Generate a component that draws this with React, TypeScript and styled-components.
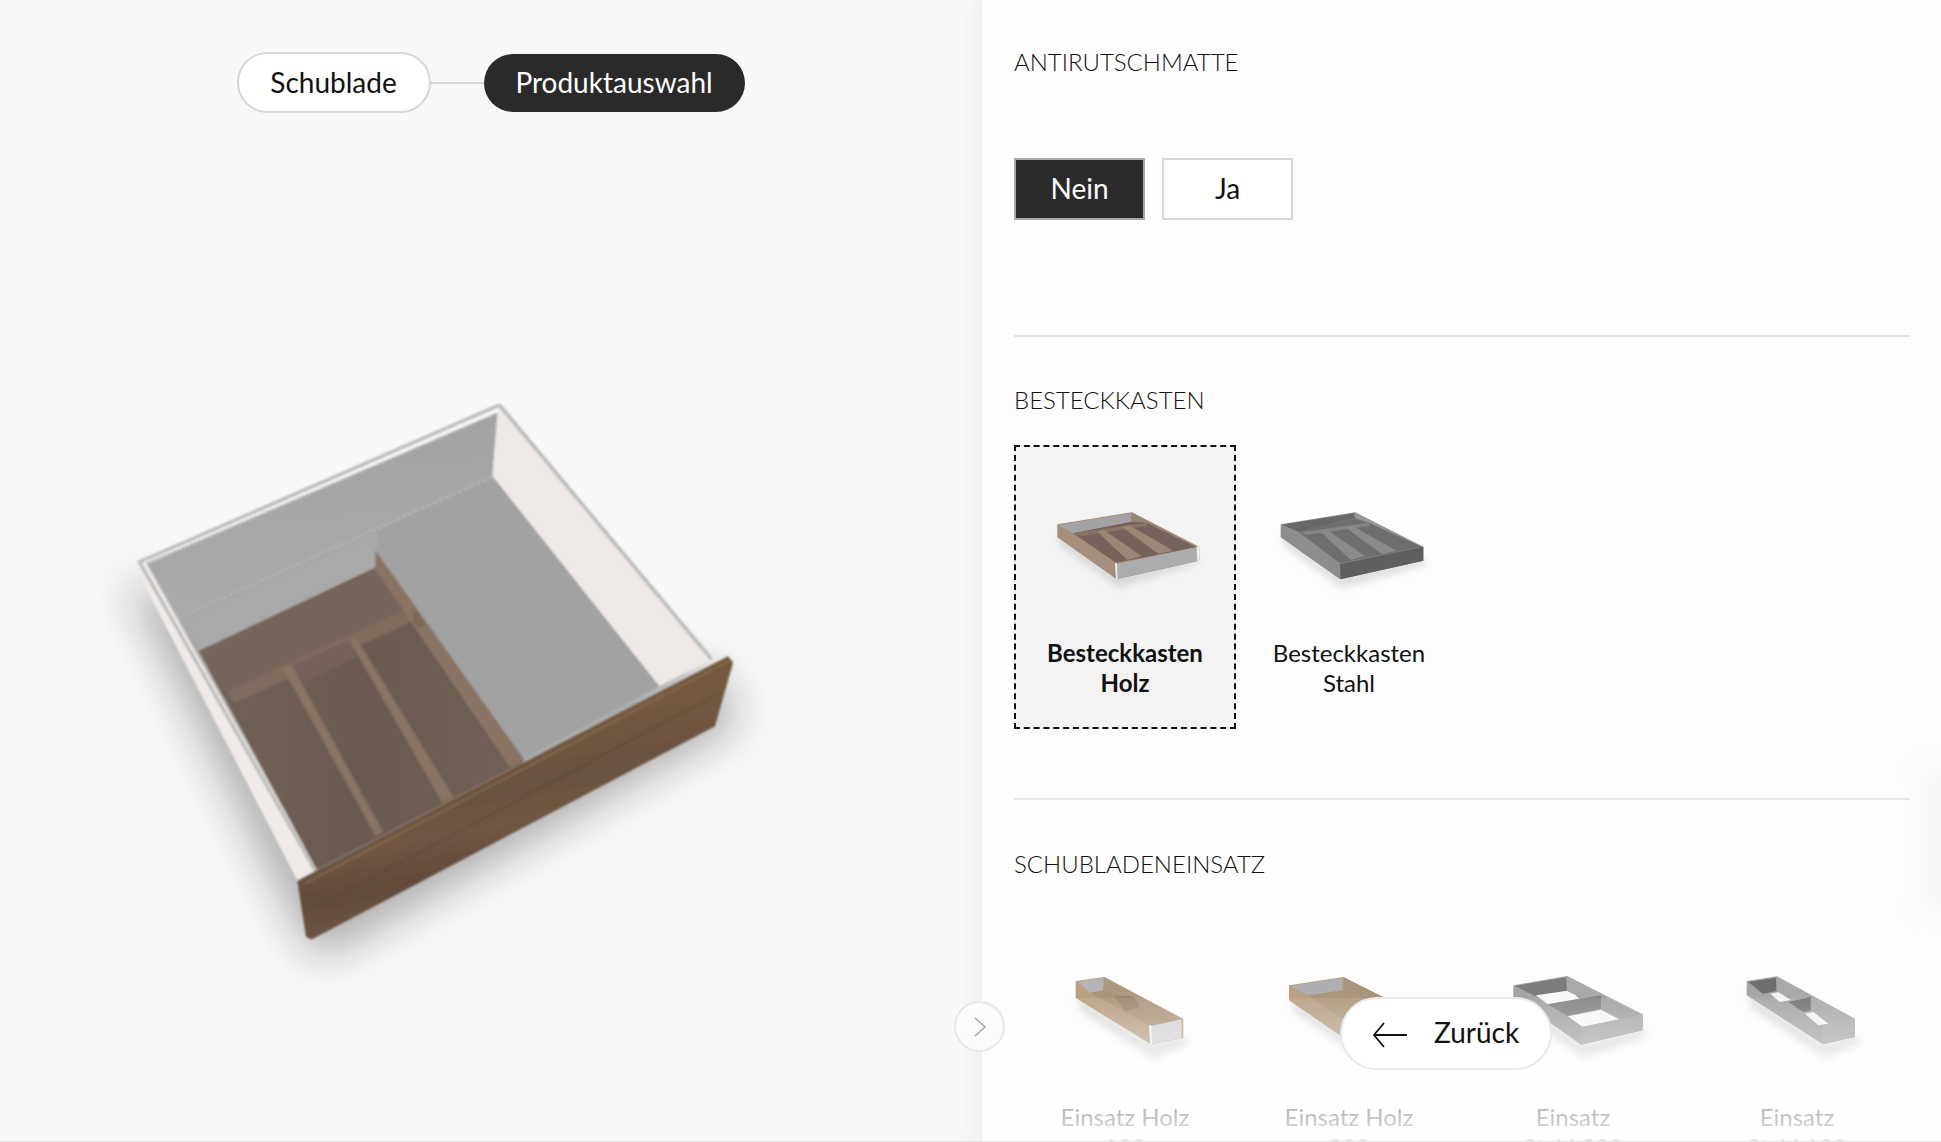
import React from "react";
import styled, { createGlobalStyle } from "styled-components";

const Global = createGlobalStyle`
  html, body { margin: 0; padding: 0; height: 100%; overflow: hidden; background: #f8f8f8; }
  * { box-sizing: border-box; }
  body { font-family: Lato, "Open Sans", "Liberation Sans", sans-serif; color: #111; }
`;

const Page = styled.div`
  display: flex;
  height: 1142px;
  overflow: hidden;
  position: relative;
  border-bottom: 1px solid #e4e4e4;
`;

const LeftPanel = styled.section`
  flex: 0 0 981px;
  display: flex;
  flex-direction: column;
  background: #f8f8f8;
`;

const Stepper = styled.nav`
  display: flex;
  align-items: center;
  justify-content: center;
  margin-top: 52px;
  height: 61px;
`;

const StepPill = styled.div<{ $active?: boolean }>`
  display: flex;
  align-items: center;
  justify-content: center;
  font-size: 28px;
  padding-bottom: 2px;
  border-radius: 31px;
  width: ${(p) => (p.$active ? "261px" : "194px")};
  height: ${(p) => (p.$active ? "58px" : "61px")};
  background: ${(p) => (p.$active ? "#2a2a2a" : "#fff")};
  color: ${(p) => (p.$active ? "#fff" : "#111")};
  border: ${(p) => (p.$active ? "none" : "2px solid #d6d6d6")};
`;

const StepLink = styled.span`
  width: 53px;
  height: 2px;
  background: #d6d6d6;
`;

const DrawerStage = styled.svg`
  display: block;
  width: 680px;
  height: 600px;
  margin: 267px 0 0 100px;
  overflow: visible;
`;

const RightPanel = styled.section`
  flex: 1;
  position: relative;
  background: #fdfdfd;
  padding: 0 31px 0 32px;
  box-shadow: -6px 0 18px rgba(0, 0, 0, 0.05);
  border-left: 1px solid #efefef;
  min-width: 0;
`;

const Section = styled.div<{ $bottom: number; $top: number; $rule?: boolean }>`
  padding-top: ${(p) => p.$top}px;
  padding-bottom: ${(p) => p.$bottom}px;
  border-bottom: ${(p) => (p.$rule ? "2px solid #e6e6e6" : "none")};
`;

const Heading = styled.h2`
  margin: 0;
  font-size: 24px;
  line-height: 30px;
  font-weight: 300;
  color: #111;
`;

const ChoiceRow = styled.div`
  display: flex;
  gap: 17px;
  margin-top: 81px;
`;

const Choice = styled.button<{ $active?: boolean }>`
  width: 131px;
  height: 62px;
  font: inherit;
  font-size: 28px;
  padding: 0 0 2px;
  background: ${(p) => (p.$active ? "#2a2a2a" : "#fff")};
  color: ${(p) => (p.$active ? "#fff" : "#111")};
  border: 2px solid ${(p) => (p.$active ? "#a8a8a8" : "#d6d6d6")};
`;

const ProductGrid = styled.div`
  display: grid;
  grid-template-columns: repeat(4, 224px);
  margin-top: 30px;
`;

const ProductCard = styled.div<{ $selected?: boolean }>`
  width: 222px;
  height: 284px;
  display: flex;
  flex-direction: column;
  align-items: center;
  padding-top: 58px;
  border: 2px dashed ${(p) => (p.$selected ? "#111" : "transparent")};
  background: ${(p) => (p.$selected ? "#f3f3f3" : "transparent")};
`;

const ProductArt = styled.svg`
  display: block;
  width: 160px;
  height: 80px;
  flex: none;
  overflow: visible;
`;

const ProductLabel = styled.div<{ $selected?: boolean }>`
  width: 170px;
  margin-top: 53px;
  font-size: 24px;
  line-height: 30px;
  text-align: center;
  font-weight: ${(p) => (p.$selected ? 700 : 400)};
  color: #111;
`;

const BottomFade = styled.div`
  position: absolute;
  left: 0;
  right: 0;
  bottom: 0;
  height: 143px;
  background: linear-gradient(rgba(255, 255, 255, 0.08), rgba(255, 255, 255, 0.88));
`;

const EdgeGlow = styled.div`
  position: absolute;
  right: -22px;
  top: 765px;
  width: 44px;
  height: 150px;
  border-radius: 22px;
  background: rgba(240, 240, 248, 0.3);
  filter: blur(10px);
`;

const CollapseButton = styled.button`
  position: absolute;
  left: -28px;
  bottom: 89px;
  width: 51px;
  height: 51px;
  padding: 0;
  border-radius: 50%;
  border: 2px solid #e8e8e8;
  background: #fbfbfb;
  display: flex;
  align-items: center;
  justify-content: center;
`;

const BackButton = styled.button`
  position: absolute;
  right: 389px;
  bottom: 71px;
  width: 212px;
  height: 73px;
  border-radius: 37px;
  border: 2px solid #e8e8e8;
  background: #fff;
  display: flex;
  align-items: center;
  justify-content: flex-start;
  gap: 26px;
  padding: 0 0 3px 30px;
  font: inherit;
  font-size: 28px;
  color: #111;
`;

const BackArrow = styled.svg`
  flex: none;
  margin-top: 5px;
`;

type Poly = [string, string];
type Art = { box: string; shadow: string; polys: Poly[] };

const arts: Record<string, Art> = {
  holz: {
    box: "15 15 480 240",
    shadow: "52,100 230,228 478,175 470,190 235,262 60,135",
    polys: [
      ["52,73 275,37 478,140 478,182 230,238 52,112", "#a68e7b"],
      ["56,75 272,40 275,65 100,100", "#a3a3a5"],
      ["275,37 470,140 320,68 275,65", "#9a8674"],
      ["100,100 275,65 320,68 470,142 228,188", "#75625a"],
      ["100,100 320,68 322,78 125,108", "#8a7565"],
      ["172,95 192,90 305,168 262,180", "#9b8674"],
      ["246,80 268,76 400,152 355,162", "#9b8674"],
      ["228,192 475,140 475,182 232,236", "#abacae"],
      ["225,190 231,190 233,238 228,238", "#f2f0ee"],
      ["470,140 478,138 478,182 472,183", "#f0f0f0"],
    ],
  },
  stahl: {
    box: "687 15 480 240",
    shadow: "722,100 900,228 1150,175 1160,195 905,265 735,140",
    polys: [
      ["722,73 945,37 1150,140 1150,182 900,238 722,112", "#8d8d8d"],
      ["726,74 942,40 945,55 775,95", "#686868"],
      ["945,37 1145,140 990,70 945,55", "#969696"],
      ["775,95 945,55 990,70 1145,140 900,190", "#6e6e6e"],
      ["780,97 985,68 990,78 800,105", "#858585"],
      ["842,95 862,90 975,168 932,180", "#8a8a8a"],
      ["916,82 938,78 1070,152 1025,162", "#8a8a8a"],
      ["900,192 1150,140 1150,182 902,238", "#5f5f5f"],
    ],
  },
  e100: {
    box: "315 21 480 240",
    shadow: "407,100 630,240 730,222 745,245 640,295 425,150",
    polys: [
      ["407,57 493,45 730,170 730,228 632,247 407,108", "#b9a184"],
      ["412,60 490,48 490,85 452,92", "#b5b5b9"],
      ["493,45 725,172 700,176 490,85", "#ae9880"],
      ["452,92 490,85 700,176 632,192", "#ab9579"],
      ["520,100 582,103 600,135 555,148", "#9c8770"],
      ["632,192 725,172 725,228 634,245", "#d4d4d6"],
      ["627,190 634,190 636,247 630,247", "#f1f0ef"],
    ],
  },
  e200: {
    box: "987 21 480 240",
    shadow: "1047,100 1240,242 1435,200 1445,225 1250,285 1065,150",
    polys: [
      ["1047,70 1210,45 1435,157 1435,205 1240,248 1047,115", "#b9a184"],
      ["1052,72 1207,48 1208,85 1105,100", "#adadb2"],
      ["1210,45 1430,157 1395,162 1208,85", "#a9947c"],
      ["1105,100 1208,85 1395,162 1240,195", "#ad987d"],
      ["1240,195 1435,157 1435,205 1240,248", "#d2d2d4"],
    ],
  },
  s200: {
    box: "276 21 480 240",
    shadow: "337,100 540,242 725,200 740,225 545,290 355,150",
    polys: [
      ["337,70 498,42 725,157 725,205 540,248 337,105", "#a4a4a4"],
      ["342,72 495,46 498,87 402,102", "#7c7c7c"],
      ["405,100 510,85 535,110 440,127", "#f8f8f8"],
      ["498,42 720,157 615,143 498,87", "#a9a9a9"],
      ["440,127 600,100 600,140 500,162", "#858585"],
      ["500,163 600,143 660,175 545,195", "#f6f6f6"],
      ["600,100 720,157 660,172 600,140", "#a2a2a2"],
      ["540,195 725,157 725,205 540,248", "#a9a9a9"],
    ],
  },
  s100: {
    box: "951 21 480 240",
    shadow: "1040,95 1268,240 1365,220 1380,245 1275,290 1055,140",
    polys: [
      ["1040,57 1130,43 1365,170 1365,225 1268,247 1040,100", "#a6a6a6"],
      ["1045,60 1128,47 1130,87 1088,95", "#6e6e6e"],
      ["1110,95 1150,88 1175,113 1140,120", "#f2f2f2"],
      ["1130,43 1360,170 1285,185 1130,87", "#a9a9a9"],
      ["1165,120 1232,105 1232,145 1210,150", "#737373"],
      ["1215,155 1240,150 1285,185 1255,190", "#f4f4f4"],
      ["1268,190 1365,170 1365,225 1268,247", "#ababab"],
    ],
  },
};

const ProductImage = ({ kind }: { kind: string }) => {
  const art = arts[kind];
  return (
    <ProductArt viewBox={art.box} aria-hidden>
      <defs>
        <filter id={`s-${kind}`} x="-30%" y="-30%" width="160%" height="160%">
          <feGaussianBlur stdDeviation="11" />
        </filter>
        <filter id={`b-${kind}`} x="-5%" y="-5%" width="110%" height="110%">
          <feGaussianBlur stdDeviation="1.6" />
        </filter>
      </defs>
      <polygon points={art.shadow} fill="rgba(0,0,0,0.12)" filter={`url(#s-${kind})`} />
      <g filter={`url(#b-${kind})`}>
        {art.polys.map(([points, fill], i) => (
          <polygon key={i} points={points} fill={fill} />
        ))}
      </g>
    </ProductArt>
  );
};

const Drawer = () => (
  <DrawerStage viewBox="0 0 1568 1568" preserveAspectRatio="none" aria-hidden>
    <defs>
      <filter id="drawerShadow" x="-40%" y="-40%" width="180%" height="180%">
        <feGaussianBlur stdDeviation="55" />
      </filter>
      <filter id="drawerSoft" x="-5%" y="-5%" width="110%" height="110%">
        <feGaussianBlur stdDeviation="3" />
      </filter>
      <linearGradient id="frontWood" x1="0.55" y1="0.25" x2="0.7" y2="0.8">
        <stop offset="0" stopColor="#74583f" />
        <stop offset="0.3" stopColor="#6a523f" />
        <stop offset="0.55" stopColor="#705644" />
        <stop offset="0.8" stopColor="#624a39" />
        <stop offset="1" stopColor="#6c5342" />
      </linearGradient>
      <linearGradient id="backWall" x1="0.55" y1="0" x2="0.65" y2="1">
        <stop offset="0" stopColor="#a3a3a3" />
        <stop offset="1" stopColor="#aaaaaa" />
      </linearGradient>
      <linearGradient id="trayFloor" x1="0" y1="0" x2="1" y2="0">
        <stop offset="0" stopColor="#726257" />
        <stop offset="0.5" stopColor="#6a5a4f" />
        <stop offset="1" stopColor="#716156" />
      </linearGradient>
    </defs>
    <polygon
      points="60,520 540,680 1420,760 1470,900 500,1520 400,1300"
      fill="rgba(0,0,0,0.3)"
      filter="url(#drawerShadow)"
    />
    <g filter="url(#drawerSoft)">
      <polygon points="180,625 905,250 1290,800 500,1280" fill="#a2a2a2" />
      <polygon points="105,478 917,85 905,250 180,625" fill="url(#backWall)" />
      <polygon points="185,628 640,395 640,490 228,708" fill="#a9a9a9" />
      <polyline points="185,622 560,430 905,255" fill="none" stroke="#b7b7b7" strokeWidth="4" strokeDasharray="8 8" />
      <polygon points="88,475 105,478 500,1280 455,1308 100,530" fill="#f0ebe9" />
      <polygon points="920,62 1410,730 1290,800 905,250 917,85" fill="#efe9e7" />
      <line x1="920" y1="64" x2="1410" y2="730" stroke="#bcbcbc" strokeWidth="9" />
      <line x1="88" y1="477" x2="920" y2="66" stroke="#bcbcbc" strokeWidth="9" />
      <line x1="104" y1="482" x2="917" y2="84" stroke="#e0e0e0" strokeWidth="3" strokeDasharray="6 5" />
      <line x1="92" y1="478" x2="500" y2="1290" stroke="#bcbcbc" strokeWidth="8" />
      <line x1="108" y1="480" x2="505" y2="1285" stroke="#dcdcdc" strokeWidth="3" strokeDasharray="6 5" />

      <polygon points="228,708 635,490 975,1000 500,1280" fill="url(#trayFloor)" />
      <polygon points="228,708 635,495 722,592 292,815" fill="#76655a" />
      <polygon points="292,815 722,590 726,628 310,845" fill="#7f6c5f" />
      <polygon points="635,445 980,995 945,1012 635,495" fill="#897364" />
      <polygon points="722,592 752,640 736,650 722,632" fill="#7b6759" />
      <polygon points="420,750 442,745 652,1180 636,1192" fill="#897364" />
      <polygon points="575,680 590,672 815,1090 790,1106" fill="#897364" />
      <polygon points="442,745 575,680 590,725 470,790" fill="#75645a" />

      <polygon points="455,1308 1448,722 1460,738 1418,905 488,1462 475,1455" fill="url(#frontWood)" />
      <line x1="472" y1="1316" x2="1450" y2="735" stroke="#94784f" strokeWidth="4" strokeDasharray="5 3" />
      <line x1="480" y1="1390" x2="1425" y2="820" stroke="#57412f" strokeWidth="9" opacity="0.2" />
    </g>
  </DrawerStage>
);

const besteck = [
  { kind: "holz", label: "Besteckkasten Holz", selected: true },
  { kind: "stahl", label: "Besteckkasten Stahl" },
];

const einsatz = [
  { kind: "e100", label: "Einsatz Holz 100" },
  { kind: "e200", label: "Einsatz Holz 200" },
  { kind: "s200", label: "Einsatz Stahl\u00a0200" },
  { kind: "s100", label: "Einsatz Stahl\u00a0100" },
];

const Products = ({ items }: { items: { kind: string; label: string; selected?: boolean }[] }) => (
  <ProductGrid>
    {items.map((item) => (
      <ProductCard key={item.kind} $selected={item.selected}>
        <ProductImage kind={item.kind} />
        <ProductLabel $selected={item.selected}>{item.label}</ProductLabel>
      </ProductCard>
    ))}
  </ProductGrid>
);

export default function App() {
  return (
    <Page>
      <Global />
      <LeftPanel>
        <Stepper>
          <StepPill>Schublade</StepPill>
          <StepLink />
          <StepPill $active>Produktauswahl</StepPill>
        </Stepper>
        <Drawer />
      </LeftPanel>
      <RightPanel>
        <Section $top={47} $bottom={115} $rule>
          <Heading>ANTIRUTSCHMATTE</Heading>
          <ChoiceRow>
            <Choice $active>Nein</Choice>
            <Choice>Ja</Choice>
          </ChoiceRow>
        </Section>
        <Section $top={48} $bottom={69} $rule>
          <Heading>BESTECKKASTEN</Heading>
          <Products items={besteck} />
        </Section>
        <Section $top={49} $bottom={0}>
          <Heading>SCHUBLADENEINSATZ</Heading>
          <Products items={einsatz} />
        </Section>
        <BottomFade />
        <EdgeGlow />
        <CollapseButton aria-label="Einklappen">
          <svg width="14" height="22" viewBox="0 0 14 22" fill="none">
            <path d="M2 2 L12 11 L2 20" stroke="#a8a8a8" strokeWidth="1.6" />
          </svg>
        </CollapseButton>
        <BackButton>
          <BackArrow width="36" height="26" viewBox="0 0 36 26" fill="none">
            <path d="M35 13 H2 M12 1 L2 13 L12 25" stroke="#111" strokeWidth="1.8" />
          </BackArrow>
          Zurück
        </BackButton>
      </RightPanel>
    </Page>
  );
}
